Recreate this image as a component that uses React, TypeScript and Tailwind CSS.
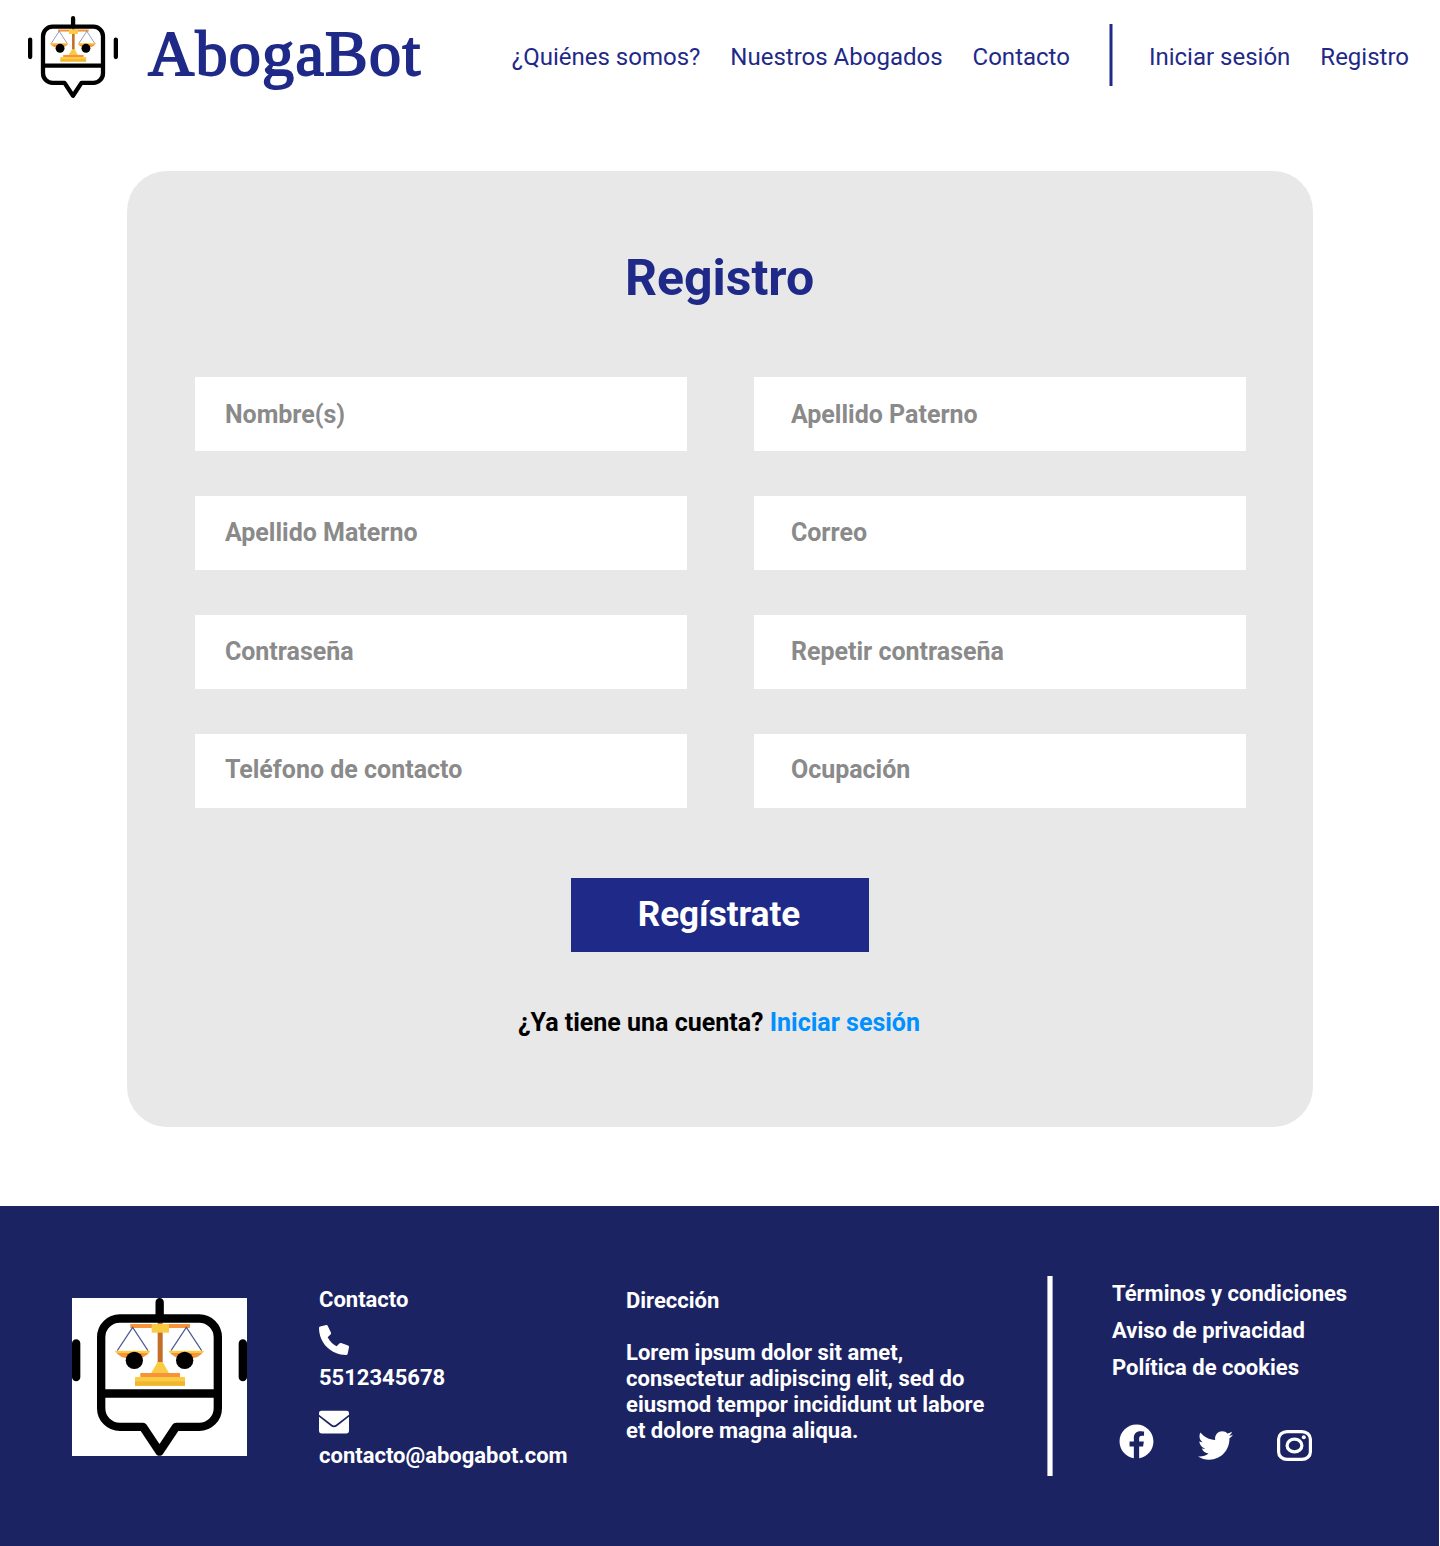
import { FaFacebook, FaTwitter } from "react-icons/fa";

function RobotLogo({ className }: { className: string }) {
  return (
    <svg viewBox="0 0 525 474" preserveAspectRatio="none" className={className} role="img" aria-label="AbogaBot">
      <rect width="525" height="474" fill="#fff" />
      <rect x="257" y="72" width="15" height="124" fill="#c36e27" />
      <rect x="175" y="78" width="179" height="12" fill="#f7943a" />
      <rect x="239" y="78" width="52" height="26" fill="#fbcb43" />
      <path d="M257 192h15l19 34h-54z" fill="#fbcb43" />
      <rect x="205" y="225" width="119" height="13" fill="#f7943a" />
      <rect x="189" y="237" width="150" height="27" fill="#fbcb43" />
      <rect x="189" y="250" width="150" height="13" fill="#f0b532" />
      {[182, 343].map((x) => (
        <g key={x}>
          <path d={`M${x - 46} 158L${x} 88L${x + 46} 158`} fill="none" stroke="#4c5a92" strokeWidth="3.5" />
          <path d={`M${x - 52} 159h104q-10 23-52 23t-52-23z`} fill="#f7943a" />
          <path d={`M${x - 53} 158h106l-4 7h-98z`} fill="#fbcb43" />
        </g>
      ))}
      <circle cx="187" cy="187" r="26" />
      <circle cx="338" cy="187" r="26" />
      <g fill="none" stroke="#000" strokeWidth="25" strokeLinecap="round" strokeLinejoin="round">
        <path d="M143.500 61.500h238a56 56 0 0 1 56 56v213a56 56 0 0 1-56 56H312L262.500 461L213 386.500h-69.500a56 56 0 0 1-56-56v-213a56 56 0 0 1 56-56z" />
        <path d="M263 12.500V60M12.500 136.500v101M512.500 136.500v101M88 286.500h349" />
      </g>
    </svg>
  );
}

function PhoneIcon({ className }: { className: string }) {
  return (
    <svg viewBox="0 0 30 30" className={className} fill="#fff">
      <path d="M1.100 1.400L7.200 0Q8.300-.1 8.800.9L12 7.700Q12.300 8.700 11.500 9.500L8.700 12.300Q11.700 18.300 17.700 21.300L20.300 18.500Q21.200 17.700 22.200 18L29 20.500Q30.200 21 30 22.200L28.600 28.900Q28.300 30 27.200 30C12 30 0 18 0 2.800Q0 1.700 1.100 1.400Z" />
    </svg>
  );
}

function EnvelopeIcon({ className }: { className: string }) {
  return (
    <svg viewBox="0 0 30 30" className={className}>
      <rect y="3.700" width="30" height="22.800" rx="2.400" fill="#fff" />
      <path d="M-.5 8.400L12.600 18.500Q15 20.400 17.400 18.500L30.500 8.400" fill="none" stroke="#1c2362" strokeWidth="1.700" />
    </svg>
  );
}

function InstagramIcon() {
  return (
    <svg viewBox="0 0 35 31" className="h-[31px] w-[35px]" fill="none" stroke="#fff" strokeWidth="3.200">
      <rect x="1.600" y="1.600" width="31.800" height="27.800" rx="8.500" ry="7.500" />
      <ellipse cx="17.500" cy="15.500" rx="7.400" ry="6.400" />
      <circle cx="26.800" cy="7.300" r="2" fill="#fff" stroke="none" />
    </svg>
  );
}

const fields = [
  "Nombre(s)",
  "Apellido Paterno",
  "Apellido Materno",
  "Correo",
  "Contraseña",
  "Repetir contraseña",
  "Teléfono de contacto",
  "Ocupación",
];

const rowPadding = ["", "pb-[2px]", "pb-[2px]", "pb-[4px]"];

export default function App() {
  return (
    <div className="flex h-[1546px] w-[1440px] flex-col bg-white font-['Roboto',sans-serif]">
      <header className="flex h-[114px] items-center pl-7 pr-[31px] text-[#1f2a88]">
        <RobotLogo className="h-[82px] w-[90px]" />
        <span className="-mt-[6px] ml-[30px] whitespace-nowrap font-['Liberation_Serif',serif] text-[64px] leading-[82px] tracking-[1.3px] [-webkit-text-stroke:1.9px_#1f2a88]">
          AbogaBot
        </span>
        <nav className="ml-auto flex items-center whitespace-nowrap text-[24px] leading-7">
          <a className="mr-[30px]">¿Quiénes somos?</a>
          <a className="mr-[30px]">Nuestros Abogados</a>
          <a>Contacto</a>
          <span className="-mt-1 ml-[39px] mr-9 flex h-[62px] w-1 justify-center bg-[#1f2a88]/50">
            <span className="w-[2px] bg-[#1f2a88]" />
          </span>
          <a className="mr-[30px]">Iniciar sesión</a>
          <a>Registro</a>
        </nav>
      </header>

      <main className="mx-[127px] mt-[57px] flex h-[956px] w-[1186px] flex-col items-center rounded-[40px] bg-[#e8e8e8]">
        <h1 className="mr-px mt-[77px] text-[50px] font-bold leading-[60px] text-[#1f2a88]">Registro</h1>
        <form className="mt-[69px] grid grid-cols-[492px_492px] gap-x-[67px] gap-y-[45px]">
          {fields.map((label, i) => (
            <input
              key={label}
              aria-label={label}
              placeholder={label}
              className={`h-[74px] bg-white text-[25px] font-bold placeholder:text-[#8a8a8a] placeholder:opacity-100 ${i % 2 ? "pl-[37.400px]" : "pl-[30.400px]"} ${rowPadding[Math.floor(i / 2)]}`}
            />
          ))}
        </form>
        <button className="mt-[70px] h-[74px] w-[298px] bg-[#1f2a88] pr-[2px] text-[35px] font-bold text-white">
          Regístrate
        </button>
        <p className="mr-[2px] mt-14 text-[25px] font-bold leading-[30px] text-black">
          ¿Ya tiene una cuenta? <a className="text-[#0090ff]">Iniciar sesión</a>
        </p>
      </main>

      <footer className="mt-[79px] flex h-[340px] w-[1439px] items-start bg-[#1c2362] pl-[72px] text-[22px] font-bold leading-[26px] text-white">
        <RobotLogo className="mt-[92px] h-[158px] w-[175px]" />
        <section className="ml-[72px] mt-[81px] flex w-[307px] flex-col">
          <h2>Contacto</h2>
          <PhoneIcon className="mt-3 size-[30px]" />
          <p className="mt-[10px]">5512345678</p>
          <EnvelopeIcon className="mt-4 size-[30px]" />
          <p className="mt-[6px]">contacto@abogabot.com</p>
        </section>
        <section className="mt-[82px] w-[372px]">
          <h2>Dirección</h2>
          <p className="mt-[26px]">
            Lorem ipsum dolor sit amet,
            <br />
            consectetur adipiscing elit, sed do
            <br />
            eiusmod tempor incididunt ut labore
            <br />
            et dolore magna aliqua.
          </p>
        </section>
        <span className="ml-[49px] mt-[70px] flex h-[200px] w-[6px] justify-center bg-white/60">
          <span className="w-1 bg-white" />
        </span>
        <section className="ml-[59px] mt-[75px] flex flex-col gap-[11px]">
          <a>Términos y condiciones</a>
          <a>Aviso de privacidad</a>
          <a>Política de cookies</a>
          <div className="ml-[7px] mt-8 flex items-start">
            <FaFacebook className="size-[35px]" />
            <FaTwitter className="ml-11 mt-1 size-[35px]" />
            <span className="ml-11 mt-[6px]">
              <InstagramIcon />
            </span>
          </div>
        </section>
      </footer>
    </div>
  );
}
